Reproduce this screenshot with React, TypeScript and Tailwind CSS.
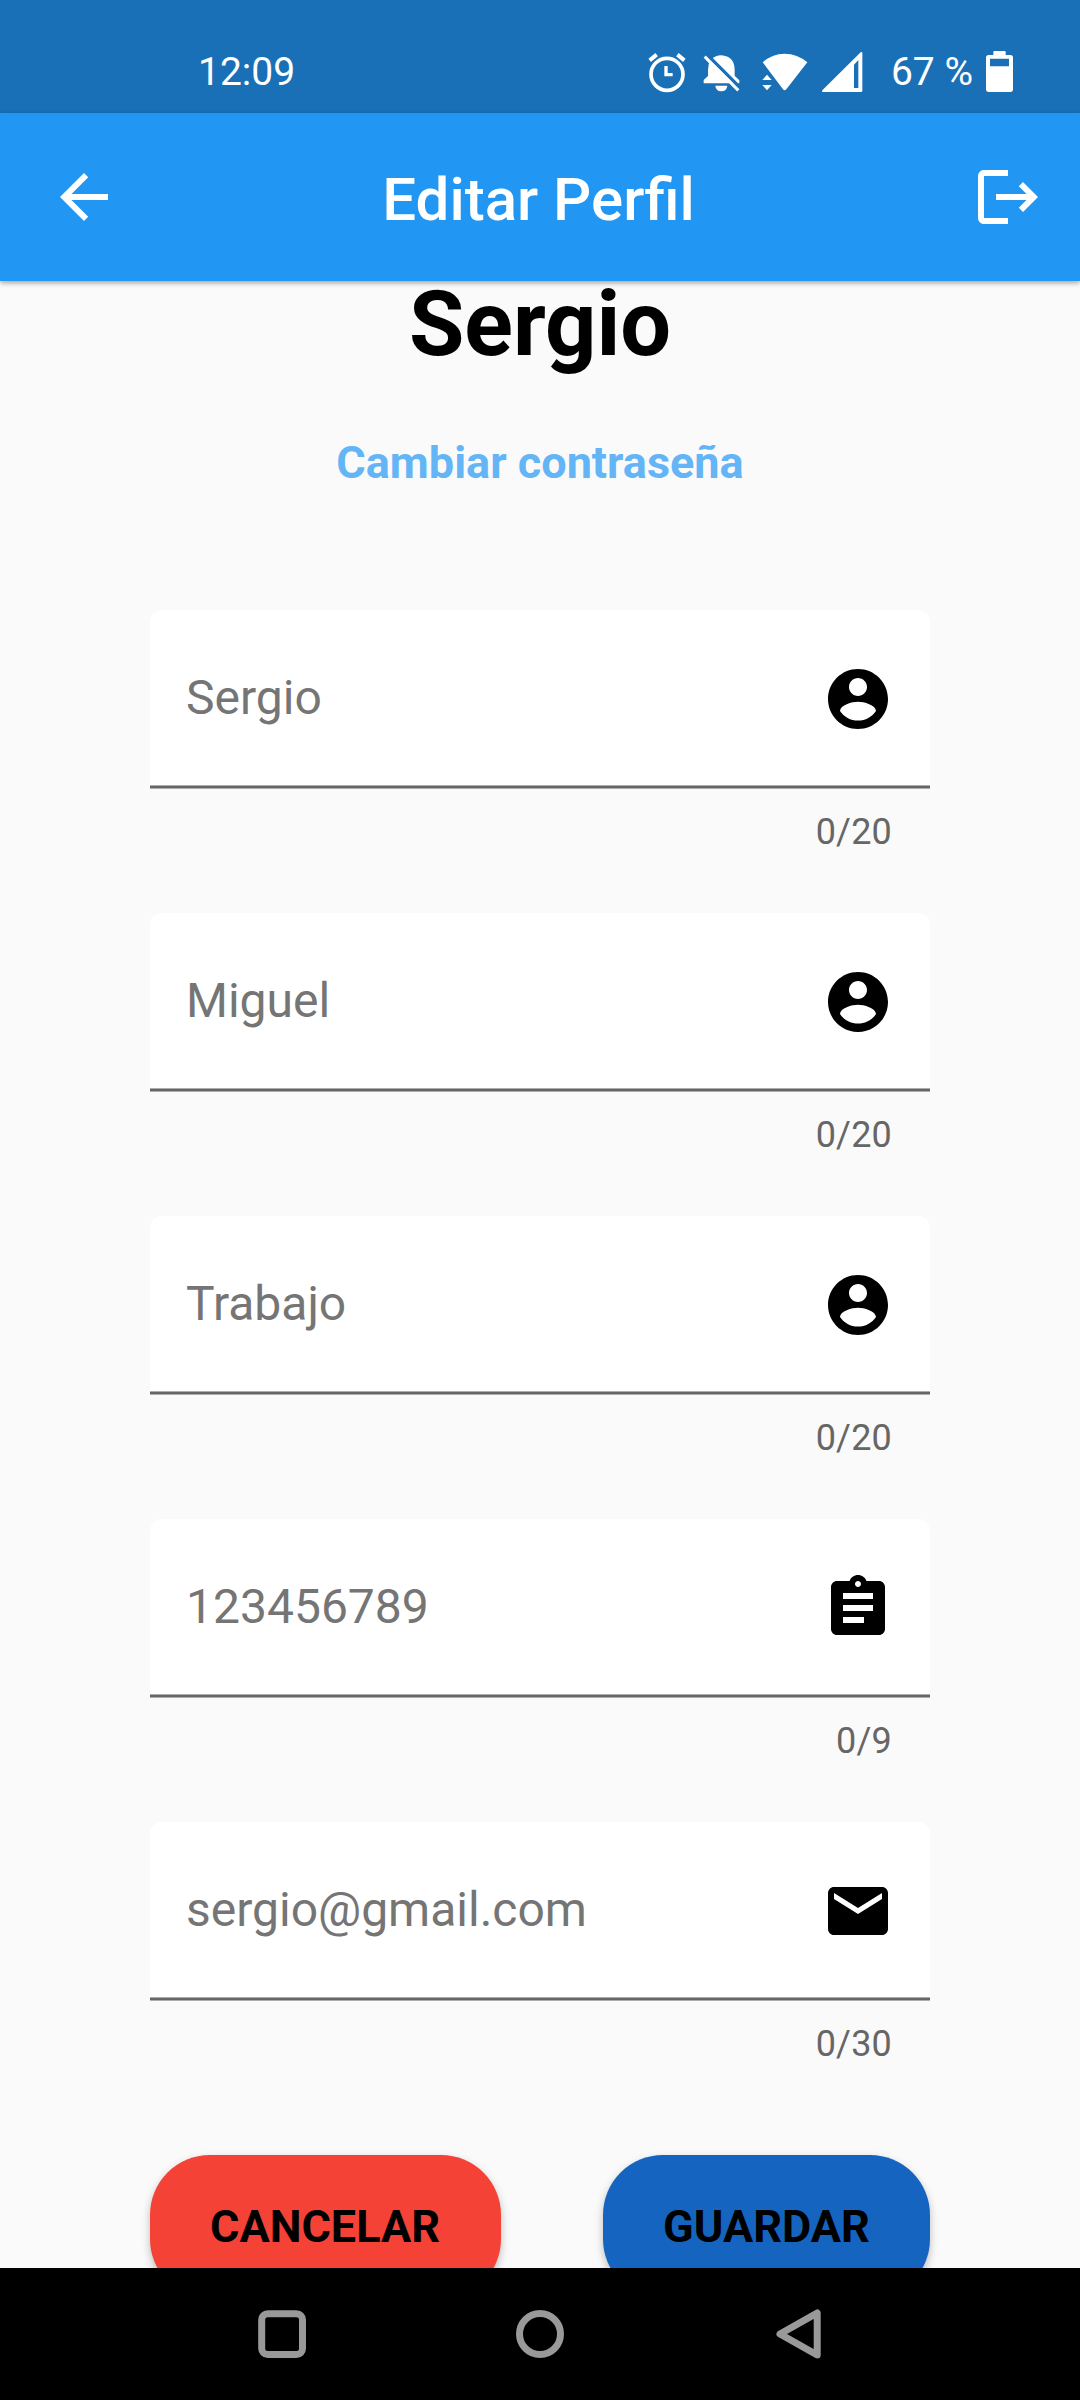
import React from "react";
import { MdArrowBack, MdAssignment, MdEmail, MdLogout } from "react-icons/md";

type Field = { label: string; count: string; icon: React.ComponentType<{ className?: string }> };

function AccountCircle({ className }: { className?: string }) {
  return (
    <svg className={className} viewBox="0 0 24 24" fill="currentColor">
      <path d="M12 2C6.48 2 2 6.48 2 12s4.48 10 10 10 10-4.48 10-10S17.52 2 12 2zm0 3c1.66 0 3 1.34 3 3s-1.34 3-3 3-3-1.34-3-3 1.34-3 3-3zm0 14.2c-2.5 0-4.71-1.28-6-3.22.03-1.99 4-3.08 6-3.08 1.99 0 5.97 1.09 6 3.08-1.29 1.94-3.5 3.22-6 3.22z" />
    </svg>
  );
}

const fields: Field[] = [
  { label: "Sergio", count: "0/20", icon: AccountCircle },
  { label: "Miguel", count: "0/20", icon: AccountCircle },
  { label: "Trabajo", count: "0/20", icon: AccountCircle },
  { label: "123456789", count: "0/9", icon: MdAssignment },
  { label: "sergio@gmail.com", count: "0/30", icon: MdEmail },
];

function StatusBar() {
  return (
    <div className="flex h-[113px] items-start bg-[#1a70b7] pl-[198px] pr-[66px] text-white">
      <span className="mt-[49px] text-[39px] leading-[46px]">12:09</span>
      <div className="ml-auto flex items-start pt-[50px]">
        {/* Alarm */}
        <svg className="h-[44px] w-[38px]" viewBox="84 60 114 132" fill="none" stroke="white">
          <circle cx="141" cy="133" r="48" strokeWidth="11" />
          <path d="M138 108v26h20" strokeWidth="10" />
          <path d="M89 91l21-17M193 91l-21-17" strokeWidth="12" />
        </svg>
        {/* Muted bell */}
        <svg className="ml-[17px] h-[44px] w-[38px]" viewBox="249 60 114 132" fill="white">
          <path d="M271 91Q285 76 304 76Q343 79 344 119V137L358 151V160H251V150L264 138V119Q264 102 271 91Z" />
          <path d="M286 167H322Q320 184 304 184Q288 184 286 167Z" />
          <path d="M262 75L362 175" stroke="#1a70b7" strokeWidth="10" />
          <path d="M254 80L355 181" stroke="white" strokeWidth="9" />
        </svg>
        {/* Wi-Fi with traffic arrows */}
        <svg className="ml-[21px] h-[44px] w-[46px]" viewBox="425 60 138 132" fill="white">
          <path d="M427 97Q455 71 493 71Q531 71 561 97L498 178Q493 184 488 178Z" />
          <path d="M426 150L440 134L454 150ZM426 165H454L440 181Z" />
        </svg>
        {/* Mobile signal */}
        <svg className="ml-[13px] h-[44px] w-[42px]" viewBox="602 60 126 132" fill="white">
          <path fillRule="evenodd" d="M607 186Q603 184 606 181L721 67Q726 64 726 69V182Q726 186 722 186ZM701 104V174H714V90Z" />
        </svg>
        <span className="-mt-px ml-[28px] whitespace-pre text-[39px] leading-[46px]">67 %</span>
        {/* Battery */}
        <svg className="ml-[12px] h-[44px] w-[29px]" viewBox="1095 60 87 132" fill="white">
          <path fillRule="evenodd" d="M1120 75V66Q1120 63 1123 63H1154Q1157 63 1157 66V75H1171Q1179 75 1179 83V178Q1179 186 1171 186H1106Q1098 186 1098 178V83Q1098 75 1106 75ZM1110 86V109H1167V86Z" />
        </svg>
      </div>
    </div>
  );
}

function AppBar() {
  return (
    <header className="relative z-10 flex h-[168px] items-center justify-between bg-[#2196f3] pl-12 pr-9 text-white shadow-[0_2px_5px_rgba(0,0,0,0.35)]">
      <MdArrowBack className="size-[72px]" />
      <h1 className="mr-[15px] pt-[6px] text-[60px] font-medium leading-[72px]">Editar Perfil</h1>
      <MdLogout className="size-[72px]" />
    </header>
  );
}

function TextField({ label, count, icon: Icon }: Field) {
  return (
    <div className="h-[303px] w-[780px]">
      <div className="flex h-[175px] items-center justify-between rounded-t-xl bg-white px-9 pt-[3px]">
        <span className="pb-[3px] text-[48px] leading-[56px] text-[#757575]">{label}</span>
        <Icon className="size-[72px] text-black" />
      </div>
      <div className="h-1 border-y border-[#adadad] bg-[#666666]" />
      <div className="mt-[22px] pr-[38px] text-right text-[36px] leading-[42px] tracking-[0.2px] text-[#666666]">{count}</div>
    </div>
  );
}

function NavBar() {
  return (
    <nav className="relative z-10 flex h-[132px] shrink-0 items-center justify-between bg-black px-[256px] text-[#999999]">
      <svg className="size-[52px]" viewBox="0 0 52 52" fill="none" stroke="currentColor" strokeWidth="7">
        <rect x="5.7" y="5.7" width="40.8" height="40.8" rx="6" />
      </svg>
      <svg className="size-[52px]" viewBox="0 0 52 52" fill="none" stroke="currentColor" strokeWidth="7">
        <circle cx="26" cy="26" r="20.5" />
      </svg>
      <svg className="size-[52px]" viewBox="0 0 52 52" fill="none" stroke="currentColor" strokeWidth="7" strokeLinejoin="round">
        <path d="M8 26L45.2 5V47Z" />
      </svg>
    </nav>
  );
}

export default function App() {
  return (
    <div className="flex h-[2400px] w-[1080px] flex-col overflow-hidden bg-[#fafafa] font-['Roboto',sans-serif]">
      <StatusBar />
      <AppBar />
      <main className="flex h-[1987px] shrink-0 flex-col items-center">
        <h2 className="text-[90px] font-bold leading-[88px] text-black">Sergio</h2>
        <a className="mt-[67px] text-[45px] font-bold leading-[54px] text-[#64b5f6]">Cambiar contraseña</a>
        <div className="mt-[120px]">
          {fields.map((field) => (
            <TextField key={field.label} {...field} />
          ))}
        </div>
        <div className="mt-[30px] flex w-[780px] justify-between text-[45px] font-bold leading-[54px] text-black">
          <button className="h-36 w-[351px] shrink-0 rounded-[60px] bg-[#f44336] pr-px shadow-[0_4px_8px_rgba(0,0,0,0.25)]">CANCELAR</button>
          <button className="h-36 w-[327px] shrink-0 rounded-[60px] bg-[#1565c0] shadow-[0_4px_8px_rgba(0,0,0,0.25)]">GUARDAR</button>
        </div>
      </main>
      <NavBar />
    </div>
  );
}
